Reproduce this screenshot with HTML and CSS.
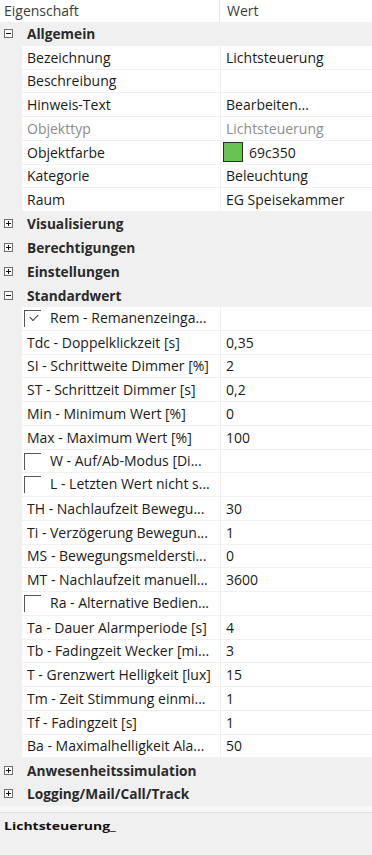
FILE: index.html
```html
<!DOCTYPE html>
<html lang="de">
<head>
<meta charset="utf-8">
<title>Eigenschaften</title>
<link rel="stylesheet" href="styles.css">
</head>
<body>
<div class="grid">
  <div class="header">
    <div class="hname">Eigenschaft</div>
    <div class="hval">Wert</div>
  </div>

  <div class="group"><span class="exp minus"></span><span class="gtitle">Allgemein</span></div>
  <div class="row"><div class="name">Bezeichnung</div><div class="val">Lichtsteuerung</div></div>
  <div class="row"><div class="name">Beschreibung</div><div class="val"></div></div>
  <div class="row"><div class="name">Hinweis-Text</div><div class="val">Bearbeiten...</div></div>
  <div class="row disabled"><div class="name">Objekttyp</div><div class="val">Lichtsteuerung</div></div>
  <div class="row"><div class="name">Objektfarbe</div><div class="val"><span class="swatch"></span>69c350</div></div>
  <div class="row"><div class="name">Kategorie</div><div class="val">Beleuchtung</div></div>
  <div class="row"><div class="name">Raum</div><div class="val">EG Speisekammer</div></div>

  <div class="group"><span class="exp plus"></span><span class="gtitle">Visualisierung</span></div>
  <div class="group"><span class="exp plus"></span><span class="gtitle">Berechtigungen</span></div>
  <div class="group"><span class="exp plus"></span><span class="gtitle">Einstellungen</span></div>
  <div class="group"><span class="exp minus"></span><span class="gtitle">Standardwert</span></div>

  <div class="row"><div class="name check"><span class="cb checked"></span><span class="ctext">Rem - Remanenzeinga...</span></div><div class="val"></div></div>
  <div class="row"><div class="name">Tdc - Doppelklickzeit [s]</div><div class="val">0,35</div></div>
  <div class="row"><div class="name">SI - Schrittweite Dimmer [%]</div><div class="val">2</div></div>
  <div class="row"><div class="name">ST - Schrittzeit Dimmer [s]</div><div class="val">0,2</div></div>
  <div class="row"><div class="name">Min - Minimum Wert [%]</div><div class="val">0</div></div>
  <div class="row"><div class="name">Max - Maximum Wert [%]</div><div class="val">100</div></div>
  <div class="row"><div class="name check"><span class="cb"></span><span class="ctext">W - Auf/Ab-Modus [Di...</span></div><div class="val"></div></div>
  <div class="row"><div class="name check"><span class="cb"></span><span class="ctext">L - Letzten Wert nicht s...</span></div><div class="val"></div></div>
  <div class="row"><div class="name">TH - Nachlaufzeit Bewegu...</div><div class="val">30</div></div>
  <div class="row"><div class="name">Ti - Verzögerung Bewegun...</div><div class="val">1</div></div>
  <div class="row"><div class="name">MS - Bewegungsmeldersti...</div><div class="val">0</div></div>
  <div class="row"><div class="name">MT - Nachlaufzeit manuell...</div><div class="val">3600</div></div>
  <div class="row"><div class="name check"><span class="cb"></span><span class="ctext">Ra - Alternative Bedien...</span></div><div class="val"></div></div>
  <div class="row"><div class="name">Ta - Dauer Alarmperiode [s]</div><div class="val">4</div></div>
  <div class="row"><div class="name">Tb - Fadingzeit Wecker [mi...</div><div class="val">3</div></div>
  <div class="row"><div class="name">T - Grenzwert Helligkeit [lux]</div><div class="val">15</div></div>
  <div class="row"><div class="name">Tm - Zeit Stimmung einmi...</div><div class="val">1</div></div>
  <div class="row"><div class="name">Tf - Fadingzeit [s]</div><div class="val">1</div></div>
  <div class="row"><div class="name">Ba - Maximalhelligkeit Ala...</div><div class="val">50</div></div>

  <div class="group"><span class="exp plus"></span><span class="gtitle">Anwesenheitssimulation</span></div>
  <div class="group"><span class="exp plus"></span><span class="gtitle">Logging/Mail/Call/Track</span></div>
</div>
<div class="splitter"></div>
<div class="desc"><span class="desctitle">Lichtsteuerung_</span></div>
</body>
</html>
```
FILE: styles.css
```css
html, body {
  margin: 0;
  padding: 0;
}
body {
  width: 372px;
  height: 855px;
  overflow: hidden;
  background: #f0f0f0;
  font-family: "Open Sans", "Noto Sans", "DejaVu Sans", sans-serif;
  font-size: 14px;
  color: #1a1a1a;
}
.grid {
  display: flex;
  flex-direction: column;
}
.header {
  display: flex;
  height: 22px;
  background: #ffffff;
  color: #3c3c3c;
  box-sizing: border-box;
}
.hname {
  width: 220px;
  padding-left: 4px;
  box-sizing: border-box;
  line-height: 21px;
  border-right: 1px solid #e5e5e5;
}
.hval {
  flex: 1;
  padding-left: 7px;
  line-height: 21px;
}
.group {
  display: flex;
  align-items: center;
  height: 23.75px;
  box-sizing: border-box;
}
.exp {
  position: relative;
  width: 9px;
  height: 9px;
  margin-left: 4px;
  margin-right: 14px;
  box-sizing: border-box;
  border: 1px solid #6e6e6e;
  background: #ffffff;
  flex: none;
}
.exp::before {
  content: "";
  position: absolute;
  left: 1px;
  top: 3px;
  width: 5px;
  height: 1px;
  background: #111;
}
.exp.plus::after {
  content: "";
  position: absolute;
  left: 3px;
  top: 1px;
  width: 1px;
  height: 5px;
  background: #111;
}
.gtitle {
  font-weight: 700;
  font-size: 13.7px;
  color: #2a2a2a;
}
.row {
  display: flex;
  height: 23.75px;
  box-sizing: border-box;
  padding-left: 22px;
  padding-bottom: 1px;
}
.name, .val {
  background: #ffffff;
  display: flex;
  align-items: center;
  white-space: nowrap;
  overflow: hidden;
  text-overflow: ellipsis;
  box-sizing: border-box;
}
.name {
  width: 198px;
  padding-left: 5px;
  flex: none;
}
.val {
  flex: 1;
  margin-left: 1px;
  padding-left: 5px;
}
.disabled .name, .disabled .val {
  color: #8c8c8c;
}
.swatch {
  width: 20px;
  height: 20px;
  box-sizing: border-box;
  border: 1px solid #2b2b2b;
  background: #69c350;
  margin-left: -3px;
  margin-right: 6px;
  flex: none;
}
.name.check {
  padding-left: 2px;
  align-items: flex-start;
}
.cb {
  position: relative;
  width: 17px;
  height: 17px;
  margin-top: 3px;
  box-sizing: border-box;
  border-top: 1px solid #555;
  border-left: 1px solid #555;
  flex: none;
}
.cb.checked::after {
  content: "";
  position: absolute;
  left: 5px;
  top: 3px;
  width: 7px;
  height: 4px;
  border-left: 1.5px solid #333;
  border-bottom: 1.5px solid #333;
  transform: rotate(-45deg);
}
.ctext {
  margin-left: 9px;
  line-height: 22px;
  overflow: hidden;
  text-overflow: ellipsis;
}
.splitter {
  height: 6px;
  background: #f7f7f7;
  border-bottom: 1px solid #e2e2e2;
}
.desc {
  height: 60px;
  background: #f0f0f0;
  padding-left: 4px;
  padding-top: 5px;
  box-sizing: border-box;
}
.desctitle {
  font-weight: 700;
  font-size: 14px;
  color: #111;
  display: inline-block;
  transform: scaleY(0.8);
  transform-origin: top left;
}
```
